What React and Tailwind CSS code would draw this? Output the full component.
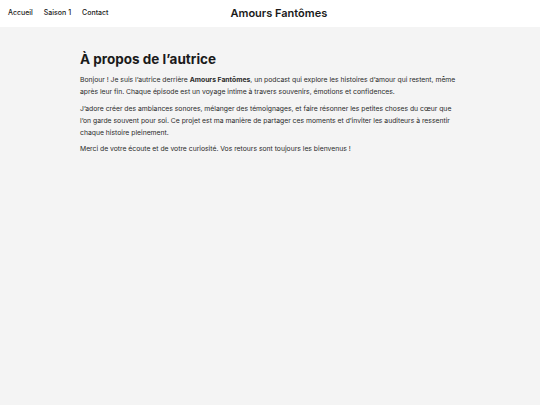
import React from "react";

const navLinks = ["Accueil", "Saison 1", "Contact"];

export default function App() {
  return (
    <div
      className="min-h-[405px] bg-[#f4f4f4] text-[#1a1a1a]"
      style={{ fontFamily: "Inter, 'Noto Sans', sans-serif" }}
    >
      {/* Header */}
      <header className="flex items-center h-[27px] bg-white px-2">
        <nav className="flex items-center gap-[11px] text-[7px] font-medium">
          {navLinks.map((name) => (
            <a key={name} href="#" className="text-[#1a1a1a]">
              {name}
            </a>
          ))}
        </nav>
        <h1 className="ml-[122px] text-[11px] font-semibold">
          Amours Fantômes
        </h1>
      </header>

      {/* About */}
      <main className="w-[380px] mx-auto pt-[22px]">
        <h2 className="text-[13.5px] font-bold leading-[20px] mb-[5px]">
          À propos de l’autrice
        </h2>
        <div className="space-y-[4.5px] text-[6.8px] leading-[12px] text-[#2a2a2a]">
          <p>
            Bonjour ! Je suis l’autrice derrière{" "}
            <strong className="font-bold">Amours Fantômes</strong>, un podcast qui
            explore les histoires d’amour qui restent, même après leur fin.
            Chaque épisode est un voyage intime à travers souvenirs, émotions et
            confidences.
          </p>
          <p>
            J’adore créer des ambiances sonores, mélanger des témoignages, et
            faire résonner les petites choses du cœur que l’on garde souvent pour
            soi. Ce projet est ma manière de partager ces moments et d’inviter
            les auditeurs à ressentir chaque histoire pleinement.
          </p>
          <p>
            Merci de votre écoute et de votre curiosité. Vos retours sont
            toujours les bienvenus !
          </p>
        </div>
      </main>
    </div>
  );
}
